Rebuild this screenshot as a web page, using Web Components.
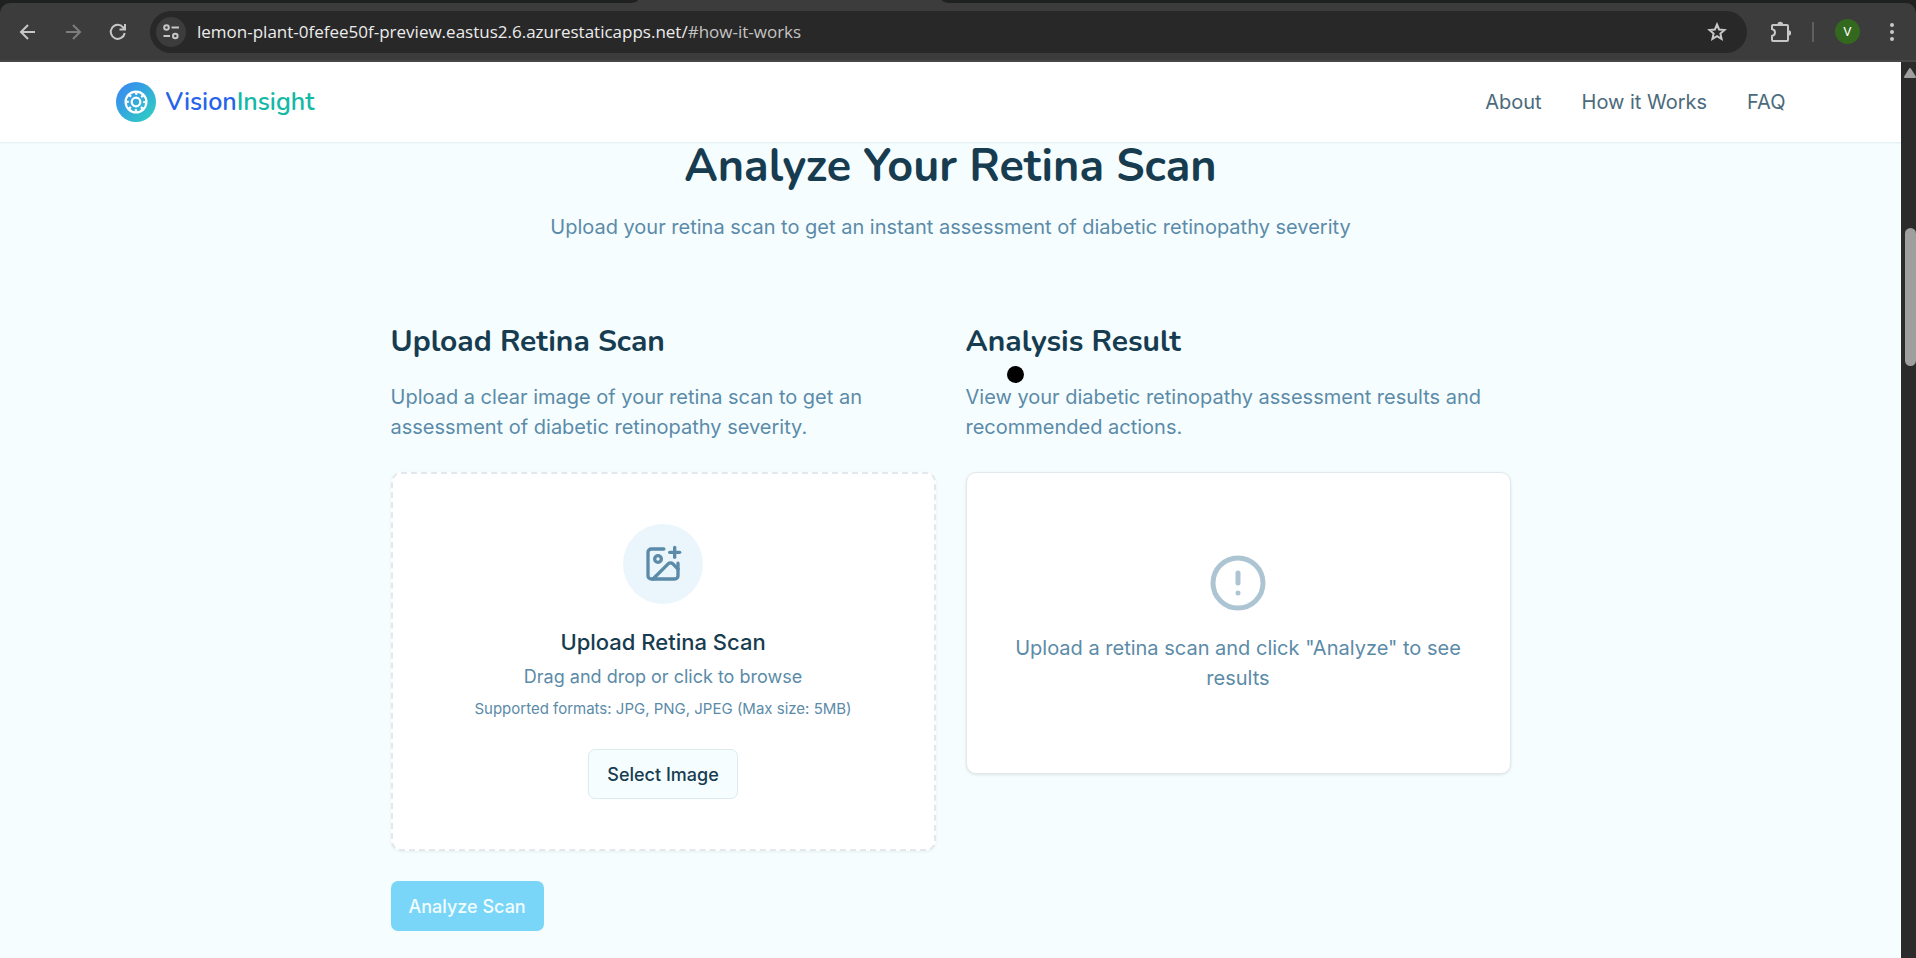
<!DOCTYPE html>
<html lang="en">
<head>
<meta charset="utf-8">
<title>VisionInsight</title>
<style>
  :root {
    --page: #f5fdff;
    --ink: #173c50;
    --muted: #5b8ba8;
    --nav: #4b6a7b;
    --line: #e2e8ec;
    --display: Nunito, Lato, "Open Sans", sans-serif;
  }
  body {
    margin: 0;
    min-height: 100vh;
    display: flex;
    flex-direction: column;
    background: var(--page);
    color: var(--ink);
    font: 20px/30px Inter, "Liberation Sans", sans-serif;
  }
  .viewport { display: flex; flex: 1; }
  .page { flex: 1; min-width: 0; }
  main { max-width: 1120px; margin: 0 auto; padding: 0 20px; }
</style>
</head>
<body>
<browser-bar></browser-bar>
<div class="viewport">
  <div class="page">
    <site-header></site-header>
    <main>
      <section-intro>
        <span slot="title">Analyze Your Retina Scan</span>
        <span slot="lead">Upload your retina scan to get an instant assessment of diabetic retinopathy severity</span>
      </section-intro>
      <scan-columns>
        <scan-panel>
          <span slot="title">Upload Retina Scan</span>
          <span slot="text">Upload a clear image of your retina scan to get an assessment of diabetic retinopathy severity.</span>
          <upload-box></upload-box>
          <analyze-button>Analyze Scan</analyze-button>
        </scan-panel>
        <scan-panel>
          <span slot="title">Analysis Result</span>
          <span slot="text">View your diabetic retinopathy assessment results and recommended actions.</span>
          <result-box>Upload a retina scan and click "Analyze" to see results</result-box>
          <pointer-dot slot="overlay"></pointer-dot>
        </scan-panel>
      </scan-columns>
    </main>
  </div>
  <scroll-track></scroll-track>
</div>
<script>
  const define = (name, html) => {
    const template = document.createElement('template');
    template.innerHTML = html;
    customElements.define(name, class extends HTMLElement {
      constructor() {
        super();
        this.attachShadow({ mode: 'open' }).append(template.content.cloneNode(true));
      }
    });
  };

  define('browser-bar', `
    <style>
      :host { display: block; background: #1f2120; color: #c7c7c7; }
      .tabs { height: 3px; display: grid; grid-template-columns: 638px 304px 1fr; background: #3c3c3c; }
      .tabs i { background: #1f2120; }
      .tabs .tab { background: #3c3c3c; }
      .tabs i:first-child { border-bottom-right-radius: 8px 3px; }
      .tabs i:last-child { border-bottom-left-radius: 8px 3px; }
      .bar { height: 59px; box-sizing: border-box; padding: 0 21px 0 18px; display: flex; align-items: center;
             background: #3c3c3c; border-radius: 10px 10px 0 0; border-bottom: 2px solid #474747; }
      button { border: 0; padding: 0; background: none; color: inherit; display: grid; place-items: center; font: inherit; }
      svg { display: block; fill: none; stroke: currentColor; stroke-width: 2; }
      .nav { width: 20px; height: 20px; margin-right: 25px; }
      .nav[disabled] { color: #7d7d7d; }
      .omni { flex: 1; height: 42px; box-sizing: border-box; padding: 0 20px 0 6px; border-radius: 21px; background: #282828;
              display: flex; align-items: center; gap: 11px; margin: 0 23px 0 -3px; }
      .site { width: 30px; height: 30px; border-radius: 50%; background: #3c3c3c; }
      .url { flex: 1; font: 17px/24px "Open Sans", "Noto Sans", sans-serif; color: #c4c4c4; white-space: nowrap; }
      .url b { font-weight: 400; color: #ececec; }
      .sep { width: 2px; height: 20px; background: #5f5f5f; margin: 0 21px 0 20px; }
      .user { width: 25px; height: 25px; border-radius: 50%; background: #33691e; color: #fff; font: 13px/25px Roboto, sans-serif; margin-right: 29px; }
    </style>
    <div class="tabs"><i></i><i class="tab"></i><i></i></div>
    <div class="bar">
      <button class="nav" aria-label="Back"><svg width="20" height="20" viewBox="0 0 20 20"><path d="M17 10H3M10 3l-7 7 7 7"/></svg></button>
      <button class="nav" aria-label="Forward" disabled><svg width="20" height="20" viewBox="0 0 20 20"><path d="M3 10h14M10 3l7 7-7 7"/></svg></button>
      <button class="nav" aria-label="Reload"><svg width="20" height="20" viewBox="0 0 20 20"><path d="M16.700 11a7 7 0 1 1-1.600-5.700L17 7.200M17 2v5.500h-5.500"/></svg></button>
      <div class="omni">
        <button class="site" aria-label="Site information"><svg width="18" height="18" viewBox="0 0 18 18"><circle cx="4.500" cy="4.500" r="2.300"/><path d="M9.500 4.500H17M1.500 13H8"/><circle cx="13.300" cy="13" r="2.300"/></svg></button>
        <span class="url"><b>lemon-plant-0fefee50f-preview.eastus2.6.azurestaticapps.net/</b>#how-it-works</span>
        <button aria-label="Bookmark"><svg width="20" height="20" viewBox="0 0 20 20"><path d="M10 2.500l2.100 5 5.400.5-4.100 3.600 1.200 5.300L10 14.100l-4.600 2.800 1.200-5.300L2.500 8l5.400-.5z"/></svg></button>
      </div>
      <button aria-label="Extensions"><svg width="22" height="22" viewBox="0 0 22 22"><path d="M3.500 4H17a1 1 0 0 1 1 1v14a1 1 0 0 1-1 1H3a1 1 0 0 1-1-1v-4c4-1 4-6 0-7V5a1 1 0 0 1 1-1z"/><path d="M7.500 3.500a2.800 2.800 0 0 1 5.600 0zM18.500 9.300a2.600 2.600 0 0 1 0 5.200z" fill="currentColor" stroke="none"/></svg></button>
      <span class="sep"></span>
      <button class="user" aria-label="Profile">V</button>
      <button aria-label="Menu"><svg width="6" height="20" viewBox="0 0 6 20" style="fill:currentColor;stroke:none"><circle cx="3" cy="3" r="2"/><circle cx="3" cy="10" r="2"/><circle cx="3" cy="17" r="2"/></svg></button>
    </div>`);

  define('site-header', `
    <style>
      :host { display: block; background: #fefffe; box-shadow: 0 1px 2px #0b4a6018; position: relative; }
      .row { max-width: 1670px; margin: 0 auto; padding: 0 40px; height: 80px; display: flex; align-items: center; justify-content: space-between; }
      a { text-decoration: none; color: var(--nav); }
      .brand { display: flex; align-items: center; gap: 10px; font: 600 25px/35px var(--display); color: #2563eb; }
      .brand b { font-weight: inherit; color: #14b8a6; }
      nav { display: flex; gap: 40px; }
    </style>
    <div class="row">
      <a class="brand" href="#top">
        <svg width="40" height="40" viewBox="0 0 40 40" fill="none" stroke="#fff">
          <defs><linearGradient id="g" x1="0" y1="0" x2="1" y2="1"><stop stop-color="#3b82f6"/><stop offset="1" stop-color="#2dd4bf"/></linearGradient></defs>
          <circle cx="20" cy="20" r="20" fill="url(#g)" stroke="none"/>
          <circle cx="20" cy="20" r="10.400" stroke-width="2.200"/>
          <circle cx="20" cy="20" r="4.300" stroke-width="2.300"/>
          <circle cx="20" cy="20" r="8.400" stroke-width="2.400" stroke-dasharray="2.400 4.197" stroke-dashoffset="1.200"/>
        </svg>
        <span>Vision<b>Insight</b></span>
      </a>
      <nav><a href="#about">About</a><a href="#how-it-works">How it Works</a><a href="#faq">FAQ</a></nav>
    </div>`);

  define('section-intro', `
    <style>
      :host { display: block; text-align: center; margin-bottom: 82px; }
      h1 { margin: 0 0 20px; font: 700 45px/50px var(--display); }
      p { margin: 0; color: var(--muted); }
    </style>
    <h1><slot name="title"></slot></h1>
    <p><slot name="lead"></slot></p>`);

  define('scan-columns', `
    <style>:host { display: grid; grid-template-columns: repeat(2, minmax(0, 1fr)); gap: 30px; align-items: start; }</style>
    <slot></slot>`);

  define('scan-panel', `
    <style>
      :host { display: block; position: relative; }
      h2 { margin: 0 0 22px; font: 700 30px/36px var(--display); }
      p { margin: 0 0 30px; color: var(--muted); }
      .body { display: flex; flex-direction: column; gap: 30px; }
    </style>
    <h2><slot name="title"></slot></h2>
    <p><slot name="text"></slot></p>
    <div class="body"><slot></slot></div>
    <slot name="overlay"></slot>`);

  define('upload-box', `
    <style>
      :host { display: flex; flex-direction: column; align-items: center; padding: 50px 20px; background: #fff;
              border: 2px dashed var(--line); border-radius: 10px; box-shadow: 0 1px 3px #0000000f; text-align: center; }
      .badge { width: 80px; height: 80px; border-radius: 50%; background: #eaf6fb; color: var(--muted); display: grid; place-items: center; margin-bottom: 20px; }
      h3 { margin: 0 0 4px; font-weight: 500; font-size: 22px; line-height: 36px; }
      p { margin: 0 0 10px; font-size: 18px; line-height: 25px; color: var(--muted); }
      small { font-size: 15px; line-height: 20px; color: var(--muted); margin-bottom: 30px; }
      button { height: 50px; padding: 0 18px; border: 1px solid #dcebee; border-radius: 7px; background: var(--page); color: var(--ink);
               font: 500 18px/25px Inter, sans-serif; }
    </style>
    <div class="badge"><svg width="40" height="40" viewBox="0 0 24 24" fill="none" stroke="currentColor" stroke-width="2" stroke-linecap="round" stroke-linejoin="round"><path d="M16 5h6"/><path d="M19 2v6"/><path d="M21 11.500V19a2 2 0 0 1-2 2H5a2 2 0 0 1-2-2V5a2 2 0 0 1 2-2h7.500"/><path d="m21 15-3.086-3.086a2 2 0 0 0-2.828 0L6 21"/><circle cx="9" cy="9" r="2"/></svg></div>
    <h3>Upload Retina Scan</h3>
    <p>Drag and drop or click to browse</p>
    <small>Supported formats: JPG, PNG, JPEG (Max size: 5MB)</small>
    <button type="button">Select Image</button>`);

  define('analyze-button', `
    <style>
      :host { display: block; }
      button { height: 50px; padding: 0 18px; border: 0; border-radius: 7px; background: #7ad6f8; color: #f3fcff; font: 500 18px/25px Inter, sans-serif; }
    </style>
    <button type="button" disabled><slot></slot></button>`);

  define('result-box', `
    <style>
      :host { display: flex; flex-direction: column; align-items: center; justify-content: center; gap: 20px; min-height: 300px; box-sizing: content-box;
              padding: 0 40px; background: #fff; border: 1px solid var(--line); border-radius: 10px; box-shadow: 0 1px 3px #0000001a;
              text-align: center; color: var(--muted); }
      svg { color: #adc5d3; }
    </style>
    <svg width="60" height="60" viewBox="0 0 24 24" fill="none" stroke="currentColor" stroke-width="2" stroke-linecap="round"><circle cx="12" cy="12" r="10"/><path d="M12 8v4M12 16h.01"/></svg>
    <span><slot></slot></span>`);

  define('pointer-dot', `
    <style>:host { position: absolute; left: 41px; top: 42px; width: 17px; height: 17px; border-radius: 50%; background: #000; }</style>`);

  define('scroll-track', `
    <style>
      :host { width: 15px; background: #2b2b2b; display: grid; grid-template-rows: 10px 150fr 138fr 592fr; justify-items: end; padding-top: 6px; box-sizing: border-box; }
      .thumb { width: 11px; border-radius: 6px; background: #9f9f9f; grid-row: 3; }
      svg { grid-row: 1; display: block; }
    </style>
    <svg width="12" height="10" viewBox="0 0 12 10"><path d="M1 9l5-8 5 8z" fill="#9f9f9f" stroke="#9f9f9f" stroke-width="2" stroke-linejoin="round"/></svg>
    <div class="thumb"></div>`);
</script>
</body>
</html>
